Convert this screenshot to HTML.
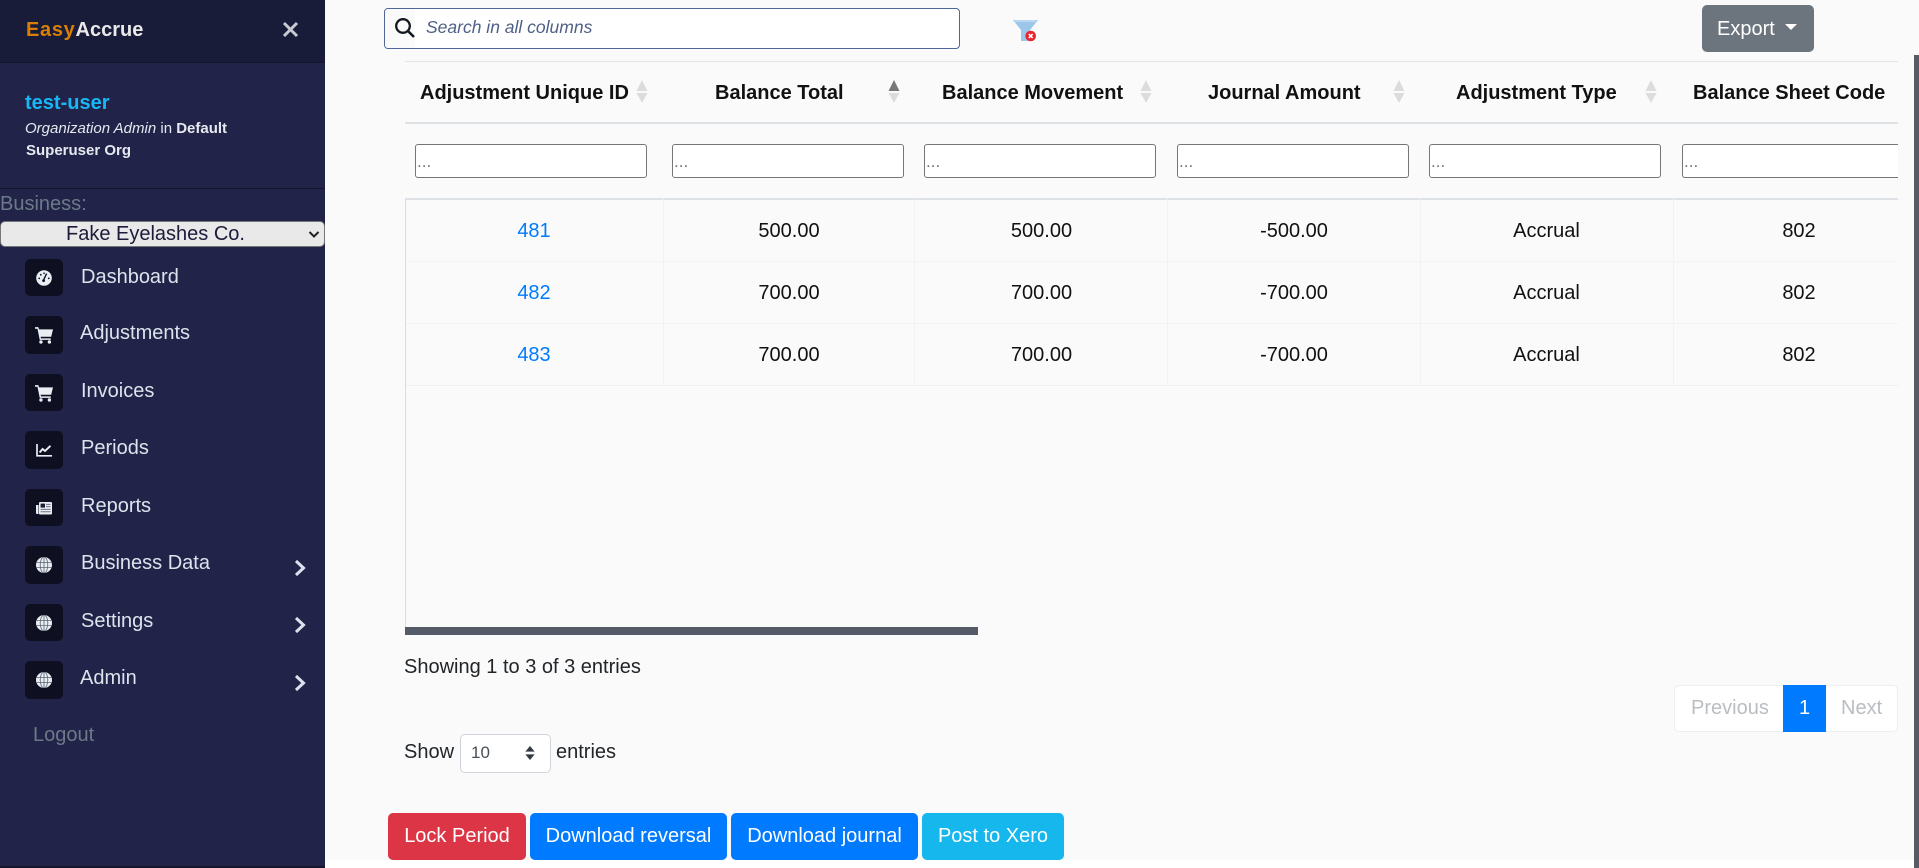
<!DOCTYPE html>
<html lang="en">
<head>
<meta charset="utf-8">
<title>EasyAccrue</title>
<style>
*{box-sizing:border-box}
html,body{margin:0;padding:0;width:1919px;height:868px;overflow:hidden;background:#fff;font-family:"Liberation Sans",Arial,sans-serif}
.a{position:absolute;white-space:nowrap}
#main{position:absolute;left:325px;top:0;width:1594px;height:860px;background:#fafafa}
#side{position:absolute;left:0;top:0;width:325px;height:866px;background:#212348}
#head{position:absolute;left:0;top:0;width:325px;height:63px;background:#181c39;border-bottom:1px solid #14162c}
.ib{position:absolute;left:25px;width:38px;height:38px;background:#0e0f20;border-radius:5px}
.ib svg{position:absolute;left:11px;top:11px;width:16px;height:16px}
.ib svg.c{left:10px;top:10px;width:18px;height:18px}
.m{position:absolute;left:81px;font-size:20px;color:#dbe4ec;line-height:24px;white-space:nowrap}
.chev{position:absolute;left:294px;width:12px;height:18px}
.th{position:absolute;top:80px;font-weight:700;font-size:20px;line-height:26px;color:#111;white-space:nowrap}
.inp{position:absolute;top:144px;height:34px;background:#fff;border:1px solid #767676;border-radius:3px;font-size:17px;color:#757575;padding:5px 0 0 1px;line-height:24px}
.sv{position:absolute;top:80px;width:12px;height:24px}
.td{position:absolute;font-size:20px;line-height:24px;color:#111;text-align:center;white-space:nowrap}
.btn{position:absolute;top:813px;height:47px;border-radius:5px;color:#fff;font-size:20px;line-height:47px;text-align:center;white-space:nowrap}
.hl{position:absolute;left:405px;width:1493px}
.vl{position:absolute;top:199px;height:186px;width:1px;background:#f2f3f5}
</style>
</head>
<body>
<div id="main"></div>
<div style="position:absolute;left:0;top:866px;width:325px;height:2px;background:#14162c"></div>
<div id="side">
  <div id="head"></div>
  <div class="a" style="left:26px;top:18px;font-size:20px;line-height:25px;font-weight:700;color:#e9e9e9"><span style="color:#d97f06;letter-spacing:.7px">Easy</span>Accrue</div>
  <svg class="a" style="left:282px;top:21px" width="17" height="17" viewBox="0 0 17 17"><path d="M2 2L15 15M15 2L2 15" stroke="#c9cbd3" stroke-width="3" stroke-linecap="butt"/></svg>
  <div class="a" style="left:25px;top:91px;font-size:20px;line-height:24px;font-weight:700;color:#17b8f5">test-user</div>
  <div class="a" style="left:25px;top:120px;font-size:15px;line-height:18px;color:#e6e9ef"><i>Organization Admin</i> in <b>Default</b></div>
  <div class="a" style="left:26px;top:142px;font-size:15px;line-height:18px;font-weight:700;color:#e6e9ef">Superuser Org</div>
  <div style="position:absolute;left:0;top:188px;width:325px;height:1px;background:#14162c"></div>
  <div class="a" style="left:0;top:193px;font-size:20px;line-height:23px;color:#6c7a88">Business:</div>
  <div style="position:absolute;left:0;top:221px;width:325px;height:26px;background:#e9e9e9;border:1px solid #767676;border-radius:5px"></div>
  <div class="a" style="left:66px;top:222px;font-size:20px;line-height:24px;color:#1c1c3a">Fake Eyelashes Co.</div>
  <svg class="a" style="left:308px;top:230px" width="12" height="9" viewBox="0 0 12 9"><path d="M1.5 2L6 6.5L10.5 2" fill="none" stroke="#222" stroke-width="2"/></svg>

  <div class="ib" style="top:259px;height:37px"><svg viewBox="0 0 16 16"><circle cx="8" cy="8" r="7.8" fill="#e8eef2"/><path d="M7.6 10L10.6 3.6" stroke="#0e0f20" stroke-width="1.4"/><circle cx="7.6" cy="10.6" r="1.4" fill="#0e0f20"/><circle cx="3.2" cy="8.4" r=".9" fill="#0e0f20"/><circle cx="4.8" cy="4.8" r=".9" fill="#0e0f20"/><circle cx="8" cy="3.2" r=".8" fill="#0e0f20"/><circle cx="12.8" cy="8.4" r=".9" fill="#0e0f20"/></svg></div>
  <div class="m" style="top:265px">Dashboard</div>

  <div class="ib" style="top:316px"><svg class="c" viewBox="0 0 16 16"><path d="M0 1H3L3.6 3H16L14.4 9.6H5L5.3 11H14V12.3H4.2L2.2 2.4H0Z" fill="#e8eef2"/><circle cx="5.3" cy="14.2" r="1.5" fill="#e8eef2"/><circle cx="12.8" cy="14.2" r="1.5" fill="#e8eef2"/></svg></div>
  <div class="m" style="left:80px;top:321px">Adjustments</div>

  <div class="ib" style="top:374px;height:37px"><svg class="c" viewBox="0 0 16 16"><path d="M0 1H3L3.6 3H16L14.4 9.6H5L5.3 11H14V12.3H4.2L2.2 2.4H0Z" fill="#e8eef2"/><circle cx="5.3" cy="14.2" r="1.5" fill="#e8eef2"/><circle cx="12.8" cy="14.2" r="1.5" fill="#e8eef2"/></svg></div>
  <div class="m" style="top:379px">Invoices</div>

  <div class="ib" style="top:431px"><svg viewBox="0 0 16 16"><path d="M1 2V13.8H16" fill="none" stroke="#e8eef2" stroke-width="1.7"/><path d="M3.6 10.5L6.6 7L9 9L14.5 3.8" fill="none" stroke="#e8eef2" stroke-width="1.9"/></svg></div>
  <div class="m" style="top:436px">Periods</div>

  <div class="ib" style="top:489px;height:37px"><svg viewBox="0 0 16 16"><path d="M0 5H2.5V14H1A1 1 0 0 1 0 13Z" fill="#e8eef2"/><rect x="3" y="2" width="13" height="12.5" rx="1" fill="#e8eef2"/><rect x="4.6" y="3.6" width="4.4" height="4" fill="#1c1d33"/><path d="M10 4.4H14.6M10 6.6H14.6M4.6 9.4H14.6M4.6 11.8H14.6" stroke="#6f7382" stroke-width="1"/></svg></div>
  <div class="m" style="top:494px">Reports</div>

  <div class="ib" style="top:546px"><svg viewBox="0 0 16 16"><circle cx="8" cy="8" r="8" fill="#e8eef2"/><path d="M0 5.4H16M0 10.6H16M8 0V16" stroke="#5d6373" stroke-width=".8"/><ellipse cx="8" cy="8" rx="3.8" ry="8" fill="none" stroke="#5d6373" stroke-width=".8"/></svg></div>
  <div class="m" style="top:551px">Business Data</div>
  <svg class="chev" style="top:559px" viewBox="0 0 12 18"><path d="M2 2L9.5 9L2 16" fill="none" stroke="#dbe4ec" stroke-width="3"/></svg>

  <div class="ib" style="top:604px;height:37px"><svg viewBox="0 0 16 16"><circle cx="8" cy="8" r="8" fill="#e8eef2"/><path d="M0 5.4H16M0 10.6H16M8 0V16" stroke="#5d6373" stroke-width=".8"/><ellipse cx="8" cy="8" rx="3.8" ry="8" fill="none" stroke="#5d6373" stroke-width=".8"/></svg></div>
  <div class="m" style="top:609px">Settings</div>
  <svg class="chev" style="top:616px" viewBox="0 0 12 18"><path d="M2 2L9.5 9L2 16" fill="none" stroke="#dbe4ec" stroke-width="3"/></svg>

  <div class="ib" style="top:661px"><svg viewBox="0 0 16 16"><circle cx="8" cy="8" r="8" fill="#e8eef2"/><path d="M0 5.4H16M0 10.6H16M8 0V16" stroke="#5d6373" stroke-width=".8"/><ellipse cx="8" cy="8" rx="3.8" ry="8" fill="none" stroke="#5d6373" stroke-width=".8"/></svg></div>
  <div class="m" style="left:80px;top:666px">Admin</div>
  <svg class="chev" style="top:674px" viewBox="0 0 12 18"><path d="M2 2L9.5 9L2 16" fill="none" stroke="#dbe4ec" stroke-width="3"/></svg>

  <div class="m" style="left:33px;top:723px;color:#6c7a88">Logout</div>
</div>

<!-- search -->
<div style="position:absolute;left:384px;top:8px;width:576px;height:41px;background:#fff;border:1px solid #4f6699;border-radius:4px"></div>
<div style="position:absolute;left:385px;top:9px;width:30px;height:39px;background:#fafafa;border-radius:3px 0 0 3px"></div>
<svg class="a" style="left:394px;top:17px" width="22" height="22" viewBox="0 0 22 22"><circle cx="9" cy="9" r="6.8" fill="none" stroke="#141820" stroke-width="2.3"/><path d="M14 14L20 20" stroke="#141820" stroke-width="2.6"/></svg>
<div class="a" style="left:426px;top:16px;font-size:17.5px;line-height:23px;font-style:italic;color:#4f5f86">Search in all columns</div>

<!-- clear filter -->
<svg class="a" style="left:1012px;top:18px" width="28" height="26" viewBox="0 0 28 26"><path d="M1 2H26L18 12V23H9V12Z" fill="#9cc6ea"/><path d="M3 3H24" stroke="#c4dcf2" stroke-width="1.5"/><circle cx="18.7" cy="18" r="5.3" fill="#e8262f"/><path d="M16.8 16.1L20.6 19.9M20.6 16.1L16.8 19.9" stroke="#fff" stroke-width="1.6"/></svg>

<!-- export -->
<div style="position:absolute;left:1702px;top:5px;width:112px;height:47px;background:#6c757d;border-radius:5px"></div>
<div class="a" style="left:1717px;top:17px;font-size:20px;line-height:24px;color:#fff">Export</div>
<svg class="a" style="left:1785px;top:24px" width="12" height="7" viewBox="0 0 12 7"><path d="M0 0H12L6 6Z" fill="#fff"/></svg>

<!-- scrollbar -->
<div style="position:absolute;left:1914px;top:55px;width:5px;height:813px;background:#565b66"></div>

<!-- table lines -->
<div class="hl" style="top:61px;height:1px;background:#e2e6ea"></div>
<div class="hl" style="top:122px;height:2px;background:#dee2e6"></div>
<div class="hl" style="top:198px;height:2px;background:#dee2e6"></div>
<div class="hl" style="top:261px;height:1px;background:#f2f3f5"></div>
<div class="hl" style="top:323px;height:1px;background:#f2f3f5"></div>
<div class="hl" style="top:385px;height:1px;background:#eff0f2"></div>
<div style="position:absolute;left:405px;top:199px;width:1px;height:428px;background:#dcdcdc"></div>
<div class="vl" style="left:663px"></div>
<div class="vl" style="left:914px"></div>
<div class="vl" style="left:1167px"></div>
<div class="vl" style="left:1420px"></div>
<div class="vl" style="left:1673px"></div>

<!-- header -->
<div class="th" style="left:420px">Adjustment Unique ID</div>
<div class="th" style="left:715px">Balance Total</div>
<div class="th" style="left:942px">Balance Movement</div>
<div class="th" style="left:1208px">Journal Amount</div>
<div class="th" style="left:1456px">Adjustment Type</div>
<div class="th" style="left:1693px">Balance Sheet Code</div>

<svg class="sv" style="left:636px" viewBox="0 0 12 24"><path d="M6 0L11.5 11H.5Z" fill="#dcdcdc"/><path d="M6 23L11.5 13H.5Z" fill="#dcdcdc"/></svg>
<svg class="sv" style="left:888px" viewBox="0 0 12 24"><path d="M6 0L11.5 11H.5Z" fill="#777"/><path d="M6 23L11.5 13H.5Z" fill="#dcdcdc"/></svg>
<svg class="sv" style="left:1140px" viewBox="0 0 12 24"><path d="M6 0L11.5 11H.5Z" fill="#dcdcdc"/><path d="M6 23L11.5 13H.5Z" fill="#dcdcdc"/></svg>
<svg class="sv" style="left:1393px" viewBox="0 0 12 24"><path d="M6 0L11.5 11H.5Z" fill="#dcdcdc"/><path d="M6 23L11.5 13H.5Z" fill="#dcdcdc"/></svg>
<svg class="sv" style="left:1645px" viewBox="0 0 12 24"><path d="M6 0L11.5 11H.5Z" fill="#dcdcdc"/><path d="M6 23L11.5 13H.5Z" fill="#dcdcdc"/></svg>

<!-- filter inputs -->
<div class="inp" style="left:415px;width:232px">...</div>
<div class="inp" style="left:672px;width:232px">...</div>
<div class="inp" style="left:924px;width:232px">...</div>
<div class="inp" style="left:1177px;width:232px">...</div>
<div class="inp" style="left:1429px;width:232px">...</div>
<div class="inp" style="left:1682px;width:216px;border-right:0;border-radius:3px 0 0 3px">...</div>

<!-- rows -->
<div class="td" style="left:405px;width:258px;top:219px;color:#007bff">481</div>
<div class="td" style="left:663px;width:252px;top:219px">500.00</div>
<div class="td" style="left:915px;width:253px;top:219px">500.00</div>
<div class="td" style="left:1168px;width:252px;top:219px">-500.00</div>
<div class="td" style="left:1420px;width:253px;top:219px">Accrual</div>
<div class="td" style="left:1673px;width:252px;top:219px">802</div>

<div class="td" style="left:405px;width:258px;top:281px;color:#007bff">482</div>
<div class="td" style="left:663px;width:252px;top:281px">700.00</div>
<div class="td" style="left:915px;width:253px;top:281px">700.00</div>
<div class="td" style="left:1168px;width:252px;top:281px">-700.00</div>
<div class="td" style="left:1420px;width:253px;top:281px">Accrual</div>
<div class="td" style="left:1673px;width:252px;top:281px">802</div>

<div class="td" style="left:405px;width:258px;top:343px;color:#007bff">483</div>
<div class="td" style="left:663px;width:252px;top:343px">700.00</div>
<div class="td" style="left:915px;width:253px;top:343px">700.00</div>
<div class="td" style="left:1168px;width:252px;top:343px">-700.00</div>
<div class="td" style="left:1420px;width:253px;top:343px">Accrual</div>
<div class="td" style="left:1673px;width:252px;top:343px">802</div>

<!-- horizontal scrollbar -->
<div style="position:absolute;left:405px;top:627px;width:573px;height:8px;background:#555b66"></div>

<div class="a" style="left:404px;top:655px;font-size:20px;line-height:24px;color:#212529">Showing 1 to 3 of 3 entries</div>

<!-- pagination -->
<div style="position:absolute;left:1674px;top:685px;width:224px;height:47px;background:#fff;border:1px solid #eceef0;border-radius:5px"></div>
<div class="a" style="left:1691px;top:696px;font-size:20px;line-height:24px;color:#b9bec3">Previous</div>
<div style="position:absolute;left:1783px;top:685px;width:43px;height:47px;background:#007bff;color:#fff;font-size:20px;line-height:47px;text-align:center">1</div>
<div class="a" style="left:1841px;top:696px;font-size:20px;line-height:24px;color:#b9bec3">Next</div>

<!-- show entries -->
<div class="a" style="left:404px;top:740px;font-size:20px;line-height:24px;color:#212529">Show</div>
<div style="position:absolute;left:460px;top:734px;width:91px;height:39px;background:#fff;border:1px solid #ced4da;border-radius:5px"></div>
<div class="a" style="left:471px;top:742px;font-size:17px;line-height:22px;color:#495057">10</div>
<svg class="a" style="left:525px;top:746px" width="10" height="14" viewBox="0 0 10 15"><path d="M5 0L10 6H0Z" fill="#343a40"/><path d="M5 15L10 9H0Z" fill="#343a40"/></svg>
<div class="a" style="left:556px;top:740px;font-size:20px;line-height:24px;color:#212529">entries</div>

<!-- buttons -->
<div class="btn" style="left:388px;width:138px;background:#dc3545">Lock Period</div>
<div class="btn" style="left:530px;width:197px;background:#007bff">Download reversal</div>
<div class="btn" style="left:731px;width:187px;background:#007bff">Download journal</div>
<div class="btn" style="left:922px;width:142px;background:#15b7ec">Post to Xero</div>
</body>
</html>
